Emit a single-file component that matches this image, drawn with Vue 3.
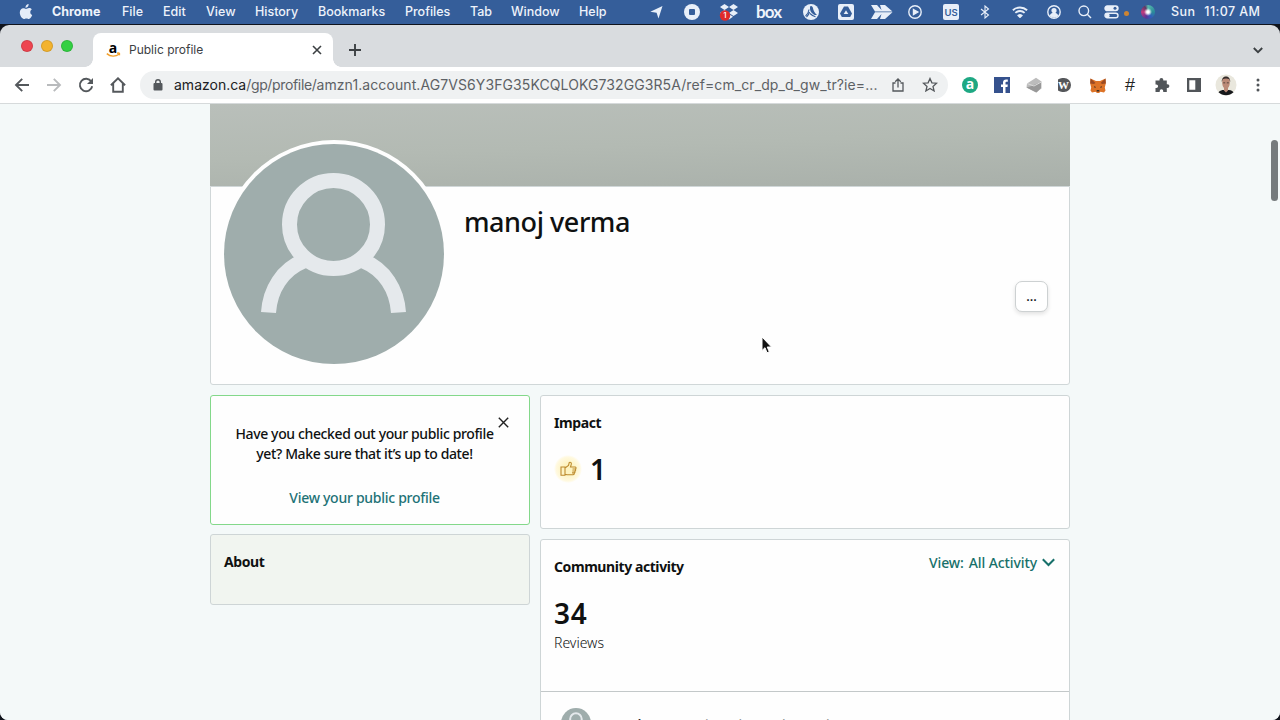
<template>
  <div class="desktop">
    <header class="menubar">
      <svg class="apple" viewBox="0 0 14 16">
        <path
          d="M9.600 0c.1 1.300-.4 2.300-1.100 3C7.900 3.600 7.200 3.900 6.500 3.800c-.1-1.100.4-2.100 1-2.700C8.100.4 8.900.1 9.600 0zM12.800 5.500c-1.100.7-1.600 1.600-1.500 2.700 0 1.300.7 2.300 1.900 2.800-.5 1.500-1.800 4-3.300 4-.9 0-1.300-.5-2.500-.5s-1.600.5-2.500.5C3.200 15 .8 11.800.8 8.600.8 5.800 2.500 4.200 4.300 4.200c1.100 0 2 .7 2.700.7.700 0 1.700-.8 3-.8 1.200 0 2.200.5 2.800 1.400z"
        />
      </svg>
      <nav class="menus">
        <span v-for="item in menus" :key="item">{{ item }}</span>
      </nav>
      <div class="status">
        <svg width="13" height="14" viewBox="0 0 13 14"><path d="M12.500 1 8.500 13.500 6.600 7.800.3 6.700z" /></svg>
        <svg width="16" height="16" viewBox="0 0 16 16">
          <circle cx="8" cy="8" r="8" /><rect class="blue" x="5" y="5" width="6" height="6" rx="1" />
        </svg>
        <svg width="20" height="18" viewBox="0 0 20 18">
          <path d="M5.500 1 10 4 5.500 7 1 4zM14.500 1 19 4l-4.500 3L10 4zM5.500 7 10 10l-4.500 3L1 10zM14.500 7 19 10l-4.500 3L10 10zM10 11l4 2.700L10 16.500 6 13.700z" />
          <circle class="badge-red" cx="6" cy="12.500" r="5.200" />
          <text class="badge-num" x="6" y="15.400">1</text>
        </svg>
        <span class="box-logo">box</span>
        <svg width="16" height="16" viewBox="0 0 16 16">
          <circle cx="8" cy="8" r="8" />
          <path class="blue" d="M7.300 2.200c1.500-.6 2.400.5 2.700 2 .4 2.200 1.800 4.700 4 6.800-1.800.5-4-.6-5.600-2.500C7.200 7.200 6.500 4 7.300 2.200z" />
          <path class="blue-line" d="M6 5.500c-.3 2.500-1.500 5-3.500 6.500M6.600 8C6 10 4.800 11.700 3.500 13M7 9.500c1.500 1.500 3.500 2.800 5.500 3.200" />
        </svg>
        <svg width="16" height="16" viewBox="0 0 16 16">
          <rect width="16" height="16" rx="2" />
          <path class="blue" d="M6 2.500h4l4 7-1.800 3.500H3.800L2 9.500z" />
          <path d="M8 6.300 10.300 10H5.700z" />
        </svg>
        <svg width="23" height="14" viewBox="0 0 23 14">
          <path d="M1 0h6l4.500 5L10 0h5l7.500 6.500H5zM5 7.300h17.500L15 14h-5l1.500-5L7 14H1z" />
        </svg>
        <svg class="line" width="14" height="14" viewBox="0 0 14 14">
          <circle cx="7" cy="7" r="6.200" /><path class="solid" d="M5.500 4.500 9.800 7 5.500 9.500z" />
        </svg>
        <span class="input-lang">US</span>
        <svg class="line thin" width="10" height="14" viewBox="0 0 10 14">
          <path d="m1 4 7.500 6L5 13V1l3.500 3L1 10" />
        </svg>
        <svg class="line wifi" width="16" height="12" viewBox="0 0 16 12">
          <path d="M.9 4.300a10.300 10.300 0 0 1 14.200 0M3.400 6.900a6.700 6.700 0 0 1 9.200 0" />
          <path class="solid" d="M6.500 9.500a2.500 2.500 0 0 1 3 0L8 11z" />
        </svg>
        <svg class="line" width="14" height="14" viewBox="0 0 14 14">
          <circle cx="7" cy="7" r="6.200" /><circle class="solid" cx="7" cy="5.600" r="1.900" />
          <path class="solid" d="M3.600 10.800c.6-3 6.200-3 6.800 0C8.500 12.500 5.500 12.500 3.600 10.800z" />
        </svg>
        <svg class="line" width="14" height="14" viewBox="0 0 14 14">
          <circle cx="5.800" cy="5.800" r="4.800" /><path d="m9.300 9.300 3.700 3.700" />
        </svg>
        <svg class="line" width="15" height="14" viewBox="0 0 15 14">
          <rect class="solid" x="1" y="1" width="13" height="4.600" rx="2.300" />
          <circle class="blue" cx="11" cy="3.300" r="1.500" />
          <rect x="1" y="8.200" width="13" height="4.600" rx="2.300" /><circle class="solid" cx="3.500" cy="10.500" r="1.500" />
        </svg>
        <span class="mic-dot"></span>
        <span class="siri"></span>
        <span class="clock"><span>Sun</span><span>11:07 AM</span></span>
      </div>
    </header>

    <div class="window">
      <div class="tabstrip">
        <div class="lights"><i class="red"></i><i class="amber"></i><i class="green"></i></div>
        <div class="tab">
          <svg class="favicon" width="15" height="15" viewBox="0 0 15 15">
            <text x="7" y="9.500">a</text>
            <path d="M.8 10.600c3.700 3.200 8.700 3.200 12.200.7M11 10.200c1.700-.4 3-.2 2.400 2" />
          </svg>
          <span class="tab-title">Public profile</span>
          <svg class="tab-close" width="10" height="10" viewBox="0 0 10 10"><path d="m1 1 8 8M9 1 1 9" /></svg>
        </div>
        <svg class="new-tab" width="12" height="12" viewBox="0 0 12 12"><path d="M6 0v12M0 6h12" /></svg>
        <svg class="tab-search" width="10" height="7" viewBox="0 0 10 7"><path d="m.8 1 4.200 4.200L9.200 1" /></svg>
      </div>

      <div class="toolbar">
        <div class="nav-buttons">
          <svg width="16" height="16" viewBox="0 0 16 16"><path d="M15 8H2M8.200 1.800 2 8l6.200 6.200" /></svg>
          <svg class="disabled" width="16" height="16" viewBox="0 0 16 16"><path d="M1 8h13M7.800 1.800 14 8l-6.200 6.200" /></svg>
          <svg width="16" height="16" viewBox="0 0 16 16">
            <path d="M13.300 4.600A6.200 6.200 0 1 0 14.200 9.200" /><path class="fill" d="M15 1v6H9z" />
          </svg>
          <svg width="16" height="16" viewBox="0 0 16 16"><path d="M.9 8.300 8 1.300l7.100 7M3.200 6.500v8.300h9.600V6.500" /></svg>
        </div>
        <div class="omnibox">
          <svg class="lock" width="10" height="12" viewBox="0 0 10 12">
            <rect x=".5" y="4" width="9" height="7.500" rx="1" /><path d="M2.700 5V3a2.300 2.300 0 0 1 4.600 0v2" />
          </svg>
          <span class="url"><b>amazon.ca</b><span class="path">/gp/profile/</span>amzn1.account.AG7VS6Y3FG35KCQLOKG732GG3R5A/ref=cm_cr_dp_d_gw_tr?ie=...</span>
          <svg class="share" width="12" height="14" viewBox="0 0 12 14">
            <path d="M3.500 5H1v8h10V5H8.500M6 9.500V1.200M3.200 3.700 6 1l2.800 2.700" />
          </svg>
          <svg class="star" width="16" height="16" viewBox="0 0 16 16">
            <path d="m8 1.500 1.900 4.300 4.700.4L11 9.400l1.100 4.600L8 11.500 3.900 14 5 9.400 1.400 6.200l4.700-.4z" />
          </svg>
        </div>
        <div class="extensions">
          <svg width="16" height="16" viewBox="0 0 16 16">
            <circle cx="8" cy="8" r="8" fill="#1ea883" /><text class="ext-a" x="8" y="12">a</text>
          </svg>
          <svg width="16" height="16" viewBox="0 0 16 16">
            <path fill="#35518d" d="M0 0h16v16H0z" />
            <path fill="#fff" d="M9 16v-6H7V7.500h2V5.700c0-2.100 1.200-3.200 3.100-3.200l1.700.1v2.200h-1.200c-.9 0-1.100.5-1.100 1.200v1.500h2.300l-.3 2.500h-2v6z" />
          </svg>
          <svg width="16" height="16" viewBox="0 0 16 16">
            <path fill="#bcbcbc" d="M1 6.500 10 .8 15.500 4.500v7L10 15.500.5 10.500z" />
            <path fill="#989898" d="m.5 10.500 5-1.500L15 5v6l-4.500 4.500z" />
            <path stroke="#dadada" fill="none" d="M1 6.500 8 9l7.300-4" />
          </svg>
          <svg width="14" height="14" viewBox="0 0 14 14">
            <path fill="#55575a" d="M1 1.500C3 .3 5 0 7 0a7 7 0 0 1 0 14c-2 0-4-.3-6-1.500z" />
            <text class="ext-wp" x="6.500" y="11">W</text>
          </svg>
          <svg width="16" height="15" viewBox="0 0 16 15">
            <path fill="#dd7327" d="M.5.500 6 3h4L15.500.500l.3 5-1 4 .7 3-1.500 2-3.500-.8L9 15H7l-1.500-1.300L2 14.500l-1.500-2 .7-3-1-4z" />
            <path fill="#9b4a22" d="M.5.500 5.500 5 3.800 6 .2 5.500zM15.500.500l-5 4.500 1.700 1 3.600-.5z" />
            <path fill="#3c3028" d="m4.200 8 2 1.300-1.700.4zM11.800 8l-2 1.300 1.700.4zM6.700 12h2.600v1.500H6.700z" />
          </svg>
          <span class="ext-hash">#</span>
          <svg width="16" height="16" viewBox="0 0 16 16">
            <path class="dark" d="M1.500 3.500h4V2.800a1.900 1.900 0 0 1 3.800 0v.7h3.500v3.700h.7a1.900 1.900 0 0 1 0 3.800h-.7v4H9.200v-.9a1.700 1.700 0 0 0-3.500 0v.9H1.500v-4h.8a1.800 1.800 0 0 0 0-3.600h-.8z" />
          </svg>
          <svg width="14" height="14" viewBox="0 0 14 14">
            <path class="dark" fill-rule="evenodd" d="M0 0h14v14H0zM2.300 2.300v9.400h6V2.300z" />
          </svg>
          <svg width="22" height="22" viewBox="0 0 22 22">
            <circle cx="11" cy="11" r="10.500" fill="#e9e7dd" />
            <path fill="#17191c" d="M3.500 18.300C6 15.500 8 16 11 16s5.500-.2 7.500 2.300c-4 4-11 4-15 0z" />
            <path fill="#bb8a78" d="M7.200 6.500C7.500 2 14.500 2 14.800 6.500c.2 4-.5 6-1.800 7.500v2.500l-2 2-2-2V14c-1.300-1.500-2-3.500-1.800-7.500z" />
            <path fill="#352b29" d="M6.800 8C6 .5 16 .5 15.200 8l-.9-2.800c-1.500-.8-5-.8-6.600 0zM8.200 8.500h2v.8h-2zM11.800 8.500h2v.8h-2z" />
          </svg>
          <svg width="4" height="14" viewBox="0 0 4 14">
            <g class="dark"><circle cx="2" cy="2" r="1.500" /><circle cx="2" cy="7" r="1.500" /><circle cx="2" cy="12" r="1.500" /></g>
          </svg>
        </div>
      </div>

      <main class="page">
        <div class="banner"></div>
        <section class="profile">
          <svg class="avatar" viewBox="0 0 228 228">
            <circle class="ring" cx="114" cy="114" r="114" />
            <circle class="disc" cx="114" cy="114" r="110" />
            <circle class="person" cx="113.500" cy="84.500" r="44" />
            <path class="person" d="M48.500 172.500c1.500-23 14-43 35-51.500M178.500 172.500c-1.500-23-14-43-35-51.500" />
          </svg>
          <h1>manoj verma</h1>
          <button class="more" type="button">...</button>
        </section>

        <div class="columns">
          <aside>
            <section class="card notice">
              <svg class="dismiss" width="11" height="11" viewBox="0 0 11 11"><path d="m.8.8 9.400 9.400M10.200.8.8 10.200" /></svg>
              <p>Have you checked out your public profile<br />yet? Make sure that it’s up to date!</p>
              <a>View your public profile</a>
            </section>
            <section class="card about"><h2>About</h2></section>
          </aside>
          <div class="feed">
            <section class="card impact">
              <h2>Impact</h2>
              <div class="helpful">
                <span class="thumb">
                  <svg width="17" height="16" viewBox="0 0 17 16">
                    <path d="M1 6h4v8.300H1zM5 7l3.500-2.500L9.300 1.400c1.500-.5 2.300.6 2 1.800L10.500 6h4.800c1 .3 1 1.500 0 2 .7.600.4 1.600-.4 2 .4.700.1 1.500-.6 1.800.2 1-.3 1.800-1.300 2H7L5 13.200M12.500 8h2.700M12.300 10h2.600M12 11.900h2.300" />
                  </svg>
                </span>
                <strong>1</strong>
              </div>
            </section>
            <section class="card activity">
              <div class="summary">
                <div class="activity-head">
                  <h2>Community activity</h2>
                  <a class="filter">
                    <span>View:</span><span>All Activity</span>
                    <svg width="13" height="9" viewBox="0 0 13 9"><path d="m.8 1.200 5.700 5.800 5.700-5.800" /></svg>
                  </a>
                </div>
                <strong>34</strong>
                <p>Reviews</p>
              </div>
              <div class="entry">
                <svg class="mini" viewBox="0 0 228 228">
                  <circle class="disc" cx="114" cy="114" r="114" />
                  <circle class="person" cx="113.500" cy="84.500" r="44" />
                </svg>
                <span class="who">manoj verma</span>
                <span class="what">reviewed a product · Jul 14, 2022</span>
              </div>
            </section>
          </div>
        </div>
        <span class="scrollbar"></span>
      </main>
    </div>

    <svg class="cursor" width="13" height="19" viewBox="0 0 13 19">
      <path d="M1 1v13.500l3-2.800 2 5 2.300-1-2.100-4.700h4.300z" />
    </svg>
  </div>
</template>

<script setup>
const menus = ['Chrome', 'File', 'Edit', 'View', 'History', 'Bookmarks', 'Profiles', 'Tab', 'Window', 'Help'];
</script>

<style>
body {
  overflow: hidden;
}
</style>

<style scoped>
.desktop {
  position: relative;
  width: 1280px;
  height: 720px;
  overflow: hidden;
  background: #10141c;
  font-family: 'Noto Sans', sans-serif;
  color: #0f1111;
}
svg {
  display: block;
  flex: none;
}
h1,
h2,
p {
  margin: 0;
}

/* menu bar */
.menubar {
  display: flex;
  align-items: center;
  height: 24px;
  background: #355e9a;
  color: #eef3fb;
  font: 500 12.5px/24px Inter, sans-serif;
  white-space: nowrap;
}
.apple {
  width: 14px;
  height: 16px;
  margin: -1px 19px 0 19px;
  fill: #e4ecf8;
}
.menus {
  display: grid;
  grid-template-columns: 70px 41px 43px 49px 63px 87px 65px 41px 68px 71px;
}
.menus span:first-child {
  font-weight: 700;
}
.status {
  display: grid;
  grid-template-columns: 34px 35px 37px 47px 35px 32px 38px 35px 37px 32px 35px 31px 26px 20px 17px 30px auto;
  align-items: center;
  fill: #e8eff9;
}
.status .line {
  fill: none;
  stroke: #e8eff9;
  stroke-width: 1.4;
}
.status .thin {
  stroke-width: 1.1;
}
.status .wifi {
  stroke-width: 1.9;
}
.status .solid {
  fill: #e8eff9;
}
.status .blue {
  fill: #355e9a;
  stroke: none;
}
.blue-line {
  fill: none;
  stroke: #355e9a;
  stroke-width: 1.1;
}
.badge-red {
  fill: #e02b2b;
}
.badge-num {
  font-size: 8px;
  fill: #fff;
  text-anchor: middle;
}
.box-logo {
  font: 700 17px/22px Lato, sans-serif;
  letter-spacing: -0.9px;
}
.input-lang {
  width: 16px;
  height: 16px;
  border-radius: 2px;
  background: #e8eff9;
  color: #355e9a;
  font-size: 9.5px;
  font-weight: 600;
  line-height: 17px;
  text-align: center;
}
.mic-dot {
  width: 5px;
  height: 5px;
  margin-top: 3px;
  border-radius: 50%;
  background: #cc8433;
}
.siri {
  width: 14px;
  height: 14px;
  border-radius: 50%;
  background: radial-gradient(circle, #fff 0 12%, transparent 40%),
    conic-gradient(#56b8ae, #2a8c98 90deg, #315cbc 150deg, #5a3598 200deg, #c33a7c 270deg, #5b3a67 330deg, #56b8ae);
}
.clock {
  display: flex;
  gap: 9px;
  letter-spacing: 0.4px;
}

/* browser chrome */
.window {
  height: 695px;
  margin-top: 1px;
  border-radius: 9px 9px 8px 8px;
  overflow: hidden;
  background: #d9dcdf;
}
.tabstrip {
  display: flex;
  align-items: center;
  box-sizing: border-box;
  height: 42px;
  padding: 8px 17px 0 21px;
}
.lights {
  display: flex;
  gap: 8px;
  width: 72px;
  margin-top: -8px;
}
.lights i {
  box-sizing: border-box;
  width: 12px;
  height: 12px;
  border: 1px solid rgba(0, 0, 0, 0.12);
  border-radius: 50%;
}
.red {
  background: #ee4550;
}
.amber {
  background: #f3b32e;
}
.green {
  background: #33d043;
}
.tab {
  position: relative;
  display: flex;
  align-items: center;
  box-sizing: border-box;
  width: 240px;
  height: 34px;
  padding: 0 11px 0 13px;
  border-radius: 8px 8px 0 0;
  background: #fff;
}
.tab::before,
.tab::after {
  content: '';
  position: absolute;
  bottom: 0;
  width: 8px;
  height: 8px;
}
.tab::before {
  left: -8px;
  background: radial-gradient(circle at 0 0, transparent 7.5px, #fff 8px);
}
.tab::after {
  right: -8px;
  background: radial-gradient(circle at 100% 0, transparent 7.5px, #fff 8px);
}
.favicon {
  overflow: visible;
}
.favicon text {
  font: 700 14px 'Open Sans', sans-serif;
  text-anchor: middle;
}
.favicon path {
  fill: none;
  stroke: #f3a02b;
  stroke-width: 1.4;
}
.tab-title {
  flex: 1;
  margin-left: 8px;
  color: #3c4043;
  font: 400 12px/17px Inter, sans-serif;
}
.tab-close,
.new-tab,
.tab-search {
  fill: none;
  stroke: #3c4043;
  stroke-width: 1.6;
}
.tab-title,
.tab-close {
  margin-top: -1px;
}
.new-tab {
  margin-left: 16px;
  stroke-width: 1.9;
}
.tab-search {
  margin-left: auto;
  stroke-width: 1.9;
}
.toolbar {
  display: flex;
  align-items: center;
  box-sizing: border-box;
  height: 37px;
  padding-left: 14px;
  border-bottom: 1px solid #d6dadb;
  background: #fff;
}
.nav-buttons {
  display: flex;
  gap: 16px;
  width: 126px;
  fill: none;
  stroke: #54585c;
  stroke-width: 1.9;
}
.disabled {
  stroke: #b9bbbd;
}
.fill {
  fill: #54585c;
  stroke: none;
}
.omnibox {
  display: flex;
  align-items: center;
  box-sizing: border-box;
  width: 808px;
  height: 28px;
  padding: 0 10px 0 13px;
  border-radius: 14px;
  background: #eff1f2;
}
.lock {
  fill: #54585c;
}
.lock path {
  fill: none;
  stroke: #54585c;
  stroke-width: 1.4;
}
.url {
  width: 707px;
  margin: 0 11px;
  color: #5d6165;
  font: 400 14px/20px Inter, sans-serif;
  letter-spacing: 0.09px;
  white-space: nowrap;
}
.url b {
  color: #202124;
  font-weight: 400;
  letter-spacing: 0;
}
.path {
  letter-spacing: -0.35px;
}
.share,
.star {
  fill: none;
  stroke: #54585c;
  stroke-width: 1.3;
}
.star {
  margin-left: 18px;
}
.extensions {
  display: grid;
  grid-template-columns: 32px 32px 31px 33px 33px 31px 33px 28px 41px 4px;
  align-items: center;
  margin-left: 14px;
}
.extensions svg {
  overflow: visible;
}
.ext-a,
.ext-wp {
  fill: #fff;
  text-anchor: middle;
}
.ext-a {
  font: 700 14px 'Open Sans', sans-serif;
}
.ext-wp {
  font: 700 11px 'Liberation Serif', serif;
}
.ext-hash {
  margin-left: 2px;
  color: #222;
  font: 400 18px/20px 'Liberation Sans', sans-serif;
}
.dark {
  fill: #515559;
}

/* profile page */
.page {
  position: relative;
  height: 616px;
  background: #f4f9f9;
}
.banner {
  width: 860px;
  height: 82px;
  margin: 0 auto;
  background: linear-gradient(178deg, #b9bfba, #b3bab3 50%, #a9b0aa);
}
.profile {
  position: relative;
  box-sizing: border-box;
  width: 860px;
  height: 199px;
  margin: 0 auto;
  padding: 13px 21px 0 253px;
  border: 1px solid #d0d7d8;
  border-radius: 0 0 3px 3px;
  background: #fefefe;
}
.avatar {
  position: absolute;
  left: 9px;
  top: -47px;
  width: 228px;
  height: 228px;
}
.ring {
  fill: #fefefe;
}
.disc {
  fill: #9fadac;
}
.person {
  fill: none;
  stroke: #e5e9ec;
  stroke-width: 15;
}
.profile h1 {
  font-size: 27px;
  font-weight: 500;
  letter-spacing: -0.45px;
  line-height: 44px;
}
.more {
  display: block;
  width: 33px;
  height: 31px;
  margin: 37px 0 0 auto;
  padding: 0;
  border: 1px solid #cdd1d2;
  border-radius: 7px;
  background: #fff;
  box-shadow: 0 2px 4px rgba(15, 17, 17, 0.12);
  color: #0f1111;
  font: 500 13px/29px 'Noto Sans', sans-serif;
}
.columns {
  display: grid;
  grid-template-columns: 320px 530px;
  gap: 10px;
  width: 860px;
  height: 325px;
  margin: 10px auto 0;
  overflow: hidden;
}
.card {
  box-sizing: border-box;
  border: 1px solid #ced5d6;
  border-radius: 3px;
  background: #fefefe;
}
.card h2 {
  font-size: 14px;
  font-weight: 700;
  letter-spacing: -0.42px;
  line-height: 20px;
}
.notice {
  position: relative;
  height: 130px;
  padding: 28px 11px 0 0;
  border-color: #83d88a;
  font-size: 14px;
  font-weight: 500;
  letter-spacing: -0.37px;
  line-height: 20px;
  text-align: center;
}
.notice a {
  display: block;
  margin-top: 24px;
  color: #1d7276;
  letter-spacing: -0.28px;
}
.dismiss {
  position: absolute;
  top: 21px;
  right: 20px;
  stroke: #222;
  stroke-width: 1.4;
}
.about {
  height: 71px;
  margin-top: 9px;
  padding: 17px 13px;
  background: #f1f5f0;
}
.impact {
  height: 134px;
  padding: 17px 13px;
}
.helpful {
  display: flex;
  align-items: center;
  gap: 8px;
  margin-top: 19px;
}
.card strong {
  display: block;
  font-size: 28px;
  font-weight: 600;
  letter-spacing: 0.8px;
  line-height: 34px;
}
.thumb {
  display: grid;
  place-items: center;
  width: 28px;
  height: 28px;
  border-radius: 50%;
  background: radial-gradient(circle, #fdf3c0 25%, #fff9df 60%, #fefefe 71%);
}
.thumb svg {
  fill: none;
  stroke: #bd8b2e;
  stroke-width: 1.1;
}
.activity {
  height: 220px;
  margin-top: 10px;
}
.summary {
  box-sizing: border-box;
  height: 152px;
  padding: 13px;
  border-bottom: 1px solid #c3c8c9;
}
.activity-head {
  display: flex;
  justify-content: space-between;
}
.activity-head h2 {
  margin-top: 4px;
}
.filter {
  display: flex;
  align-items: center;
  gap: 5px;
  height: 18px;
  margin-right: 1px;
  color: #17706a;
  font-size: 14px;
  font-weight: 500;
  letter-spacing: -0.1px;
}
.filter svg {
  fill: none;
  stroke: #17706a;
  stroke-width: 2;
}
.summary strong {
  margin-top: 19px;
}
.summary p {
  margin-top: 4px;
  font-size: 14px;
  font-weight: 300;
  line-height: 18px;
}
.entry {
  display: flex;
  padding: 16px 20px;
  font-size: 14px;
  letter-spacing: -0.4px;
  line-height: 20px;
}
.mini {
  width: 30px;
  height: 30px;
}
.entry span {
  margin-top: 7px;
  white-space: nowrap;
}
.who {
  margin-left: 9px;
  font-weight: 600;
}
.what {
  margin-left: 0;
  color: #8f9393;
}
.scrollbar {
  position: absolute;
  top: 36px;
  right: 2px;
  width: 7px;
  height: 61px;
  border-radius: 4px;
  background: #767b7d;
}
.cursor {
  position: absolute;
  left: 761px;
  top: 336px;
  fill: #111;
  stroke: #fff;
  stroke-width: 1;
}
</style>
